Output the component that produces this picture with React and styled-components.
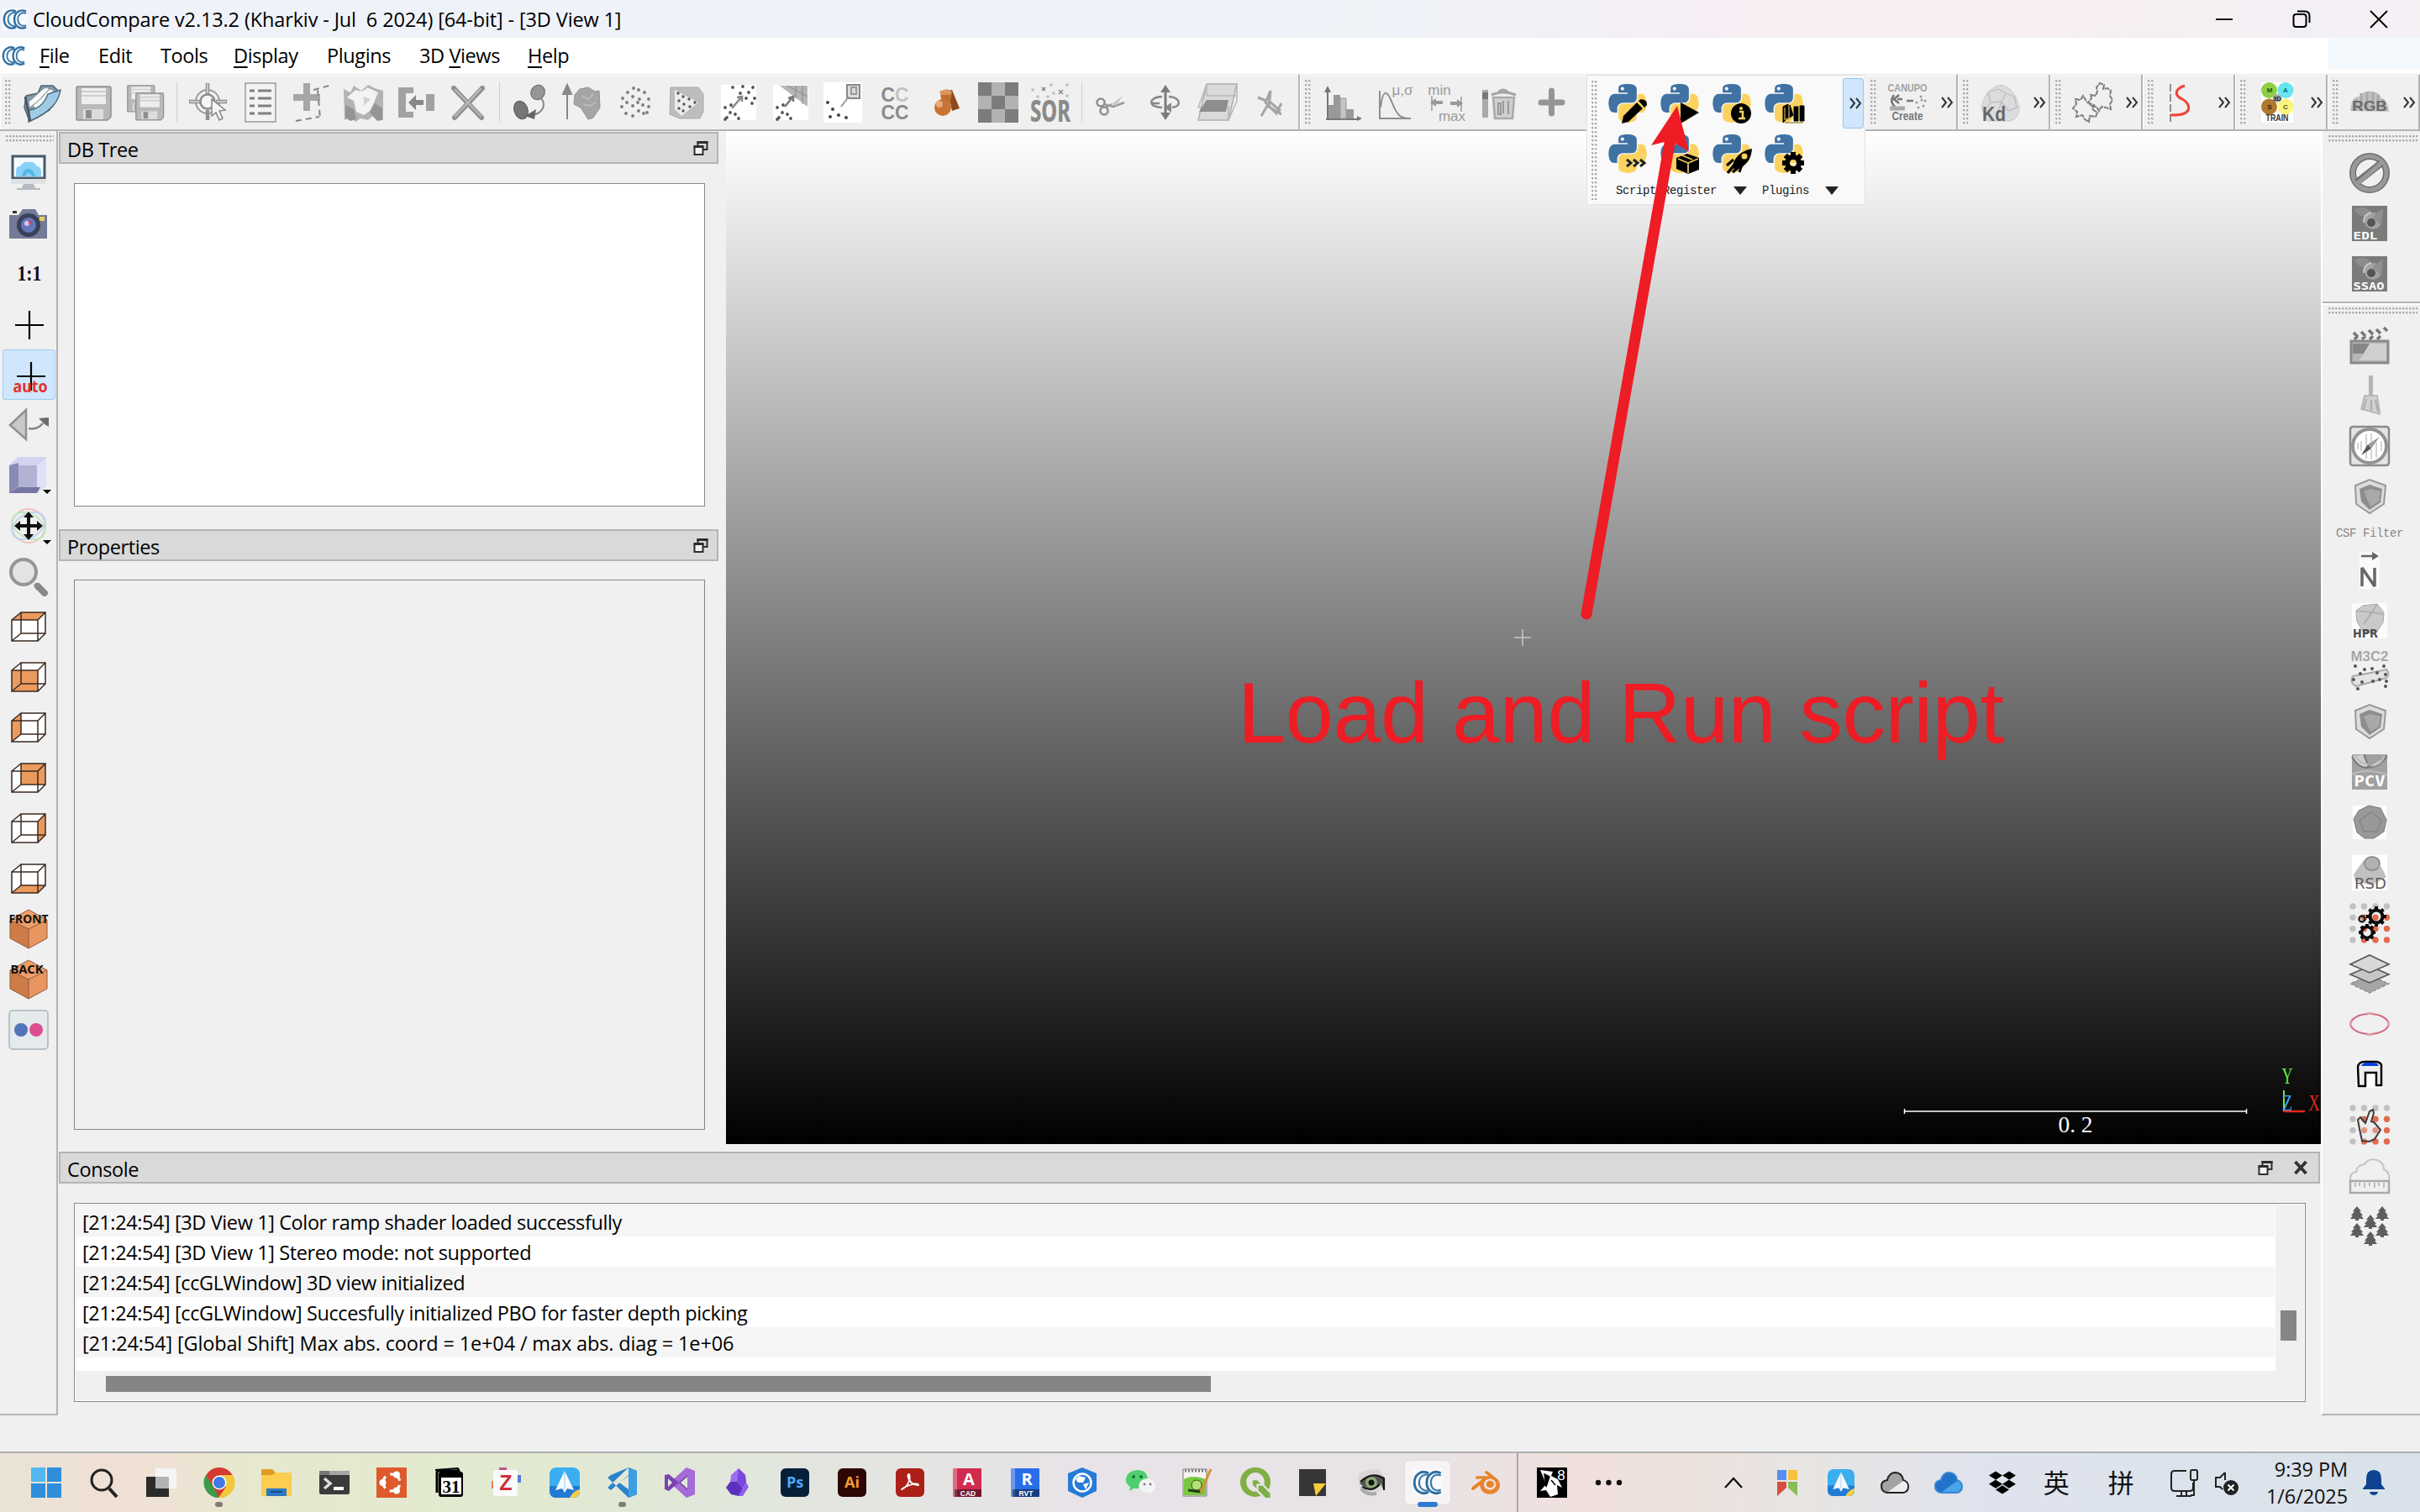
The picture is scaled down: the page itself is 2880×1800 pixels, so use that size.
import React from "react";
import styled, { createGlobalStyle } from "styled-components";
import { FaDropbox, FaUbuntu } from "react-icons/fa";
import { SiBlender, SiQgis } from "react-icons/si";

const Global = createGlobalStyle`
  *{box-sizing:border-box}
  body{margin:0;background:#f0f0f0;overflow:hidden}
`;
const ui = `"Open Sans","Noto Sans","Noto Sans CJK SC",sans-serif`;

const Shell = styled.div`
  width:2880px;height:1800px;display:flex;flex-direction:column;position:relative;
  background:#f0f0f0;color:#000;font:400 23.5px/1 ${ui};letter-spacing:-.4px;white-space:pre;
`;
const TitleBar = styled.header`
  height:45px;flex:none;display:flex;align-items:center;padding-left:3px;gap:6px;
  background:linear-gradient(90deg,#eff3f9 0 50%,#eef3f8 56%,#f2f0f7 64%,#f6eef5 70%,#f7eff0 76%,#f6eff2 90%,#f3f0f5 95%,#f5f0f4);
`;
const TitleText = styled.span`letter-spacing:-.13px;padding-top:3px;`;
const Grow = styled.div`flex:1;`;
const WinButtons = styled.div`display:flex;padding-right:3px;`;
const WinButton = styled.div`width:92px;display:flex;justify-content:center;`;
const MenuBar = styled.nav`
  height:43px;flex:none;display:flex;align-items:center;background:#fff;padding-left:2px;
`;
const MenuItem = styled.span`
  width:${p => p.$w}px;padding-top:1px;
  u{text-decoration-thickness:2px;text-underline-offset:4px;}
`;
const MenuLogo = styled.div`width:45px;display:flex;`;
const MenuCorner = styled.div`width:109px;height:37px;align-self:flex-start;background:#f4f9fd;`;

const ToolRow = styled.div`height:68px;flex:none;display:flex;border-top:1px solid #e9e9e9;position:relative;`;
const Tools = styled.div`
  width:${p => p.$w}px;height:67px;display:flex;align-items:flex-start;padding:6px 0 0 6px;
  border-right:2px solid #b4b4b4;border-bottom:2px solid #b4b4b4;box-shadow:inset 1px 1px 0 #fff;
`;
const Dots = styled.div`
  flex:none;background-image:radial-gradient(circle at 1.3px 1.3px,#a9a9a9 1.1px,transparent 1.4px);background-size:4px 5px;
  ${p => p.$flat ? "height:8px;width:" + p.$w + "px;margin:5px 0 7px 7px;" : "width:7px;height:" + (p.$h || 54) + "px;"}
`;
const Cells = styled.div`display:flex;padding-left:${p => p.$pad}px;`;
const Cell = styled.div`width:${p => p.$w || 61.8}px;height:54px;display:flex;align-items:center;justify-content:center;flex:none;`;
const Sep = styled.div`width:13.5px;height:48px;margin-top:3px;display:flex;justify-content:center;&::after{content:"";width:1px;background:#cfcfcf;}`;
const Chevron = styled.div`
  width:22px;height:54px;display:flex;align-items:center;justify-content:center;
`;
const Popup = styled.div`
  position:absolute;left:1888px;top:0;width:332px;height:155px;background:#f9f9f9;border:1px solid #e3e3e3;
  display:flex;padding:6px 0 0 5px;z-index:2;
`;
const PopBody = styled.div`width:290px;padding-left:5px;`;
const PopGrid = styled.div`display:grid;grid-template-columns:repeat(4,62px);grid-auto-rows:60px;margin-top:-3px;justify-items:center;align-items:center;`;
const PopLabels = styled.div`display:flex;align-items:center;height:28px;padding-left:17px;font:14px/1 "Liberation Mono",monospace;letter-spacing:-.4px;`;
const PopLabel = styled.span`width:${p => p.$w}px;color:#222;`;
const Triangle = styled.i`border:8px solid transparent;border-top:10px solid #222;border-bottom:0;margin-right:${p => p.$gap || 0}px;`;
const PopMore = styled.div`
  position:absolute;right:1px;top:3px;width:25px;height:60px;border:1.5px solid #90c8f6;border-radius:3px;background:#cfe6fc;
  display:flex;align-items:center;justify-content:center;padding-left:4px;
`;

const Body = styled.main`height:1572px;display:flex;align-items:flex-start;`;
const SideBar = styled.aside`
  width:${p => p.$w}px;height:1529px;flex:none;border-bottom:2px solid #b4b4b4;
  ${p => p.$left ? "border-right:2px solid #b4b4b4;" : "border-left:2px solid #fff;"}
`;
const SideGroup = styled.div`${p => p.$line ? "height:200px;padding-bottom:2px;border-bottom:2px solid #b4b4b4;margin-bottom:0;box-shadow:0 2px 0 #fff;" : ""}`;
const SideCell = styled.div`
  height:${p => p.$h || 60}px;display:flex;flex-direction:column;align-items:center;justify-content:${p => p.$h ? "flex-start" : "center"};
  padding-top:${p => p.$h ? 6 : 0}px;gap:13px;position:relative;
  ${p => p.$left ? "width:63px;margin-left:" + (p.$on ? 3 : 2) + "px;" : "width:112px;"}
  ${p => p.$on ? "background:#cfe6fc;border:1px solid #99cdf8;border-radius:3px;" : ""}
`;
const SideLabel = styled.span`font:14px/1 "Liberation Mono",monospace;letter-spacing:-.4px;color:#858585;`;

const Center = styled.div`width:2693px;flex:none;height:1572px;display:flex;flex-direction:column;`;
const Upper = styled.div`display:flex;height:1206px;`;
const Docks = styled.div`width:795px;padding:1px 0 0 1px;display:flex;flex-direction:column;`;
const DockTitle = styled.div`
  width:${p => p.$w}px;height:38px;border:2px solid #b4b4b4;background:#d9d9d9;display:flex;align-items:center;
  padding:5px ${p => p.$pr || 10}px 0 8px;flex:none;
  svg{margin-top:-5px;}
`;
const Box = styled.div`
  width:751px;height:${p => p.$h}px;margin:${p => p.$m};border:1px solid #828790;background:${p => p.$bg};flex:none;
`;
const Viewport = styled.div`flex:1;position:relative;background:linear-gradient(#fff,#000);`;
const Overlay = styled.svg`position:absolute;left:0;top:0;`;
const Caption = styled.div`
  position:absolute;left:609px;top:634px;font:102.5px/1.15 "Liberation Sans",Arial,sans-serif;color:#ee1c24;letter-spacing:-.3px;
`;
const ConsoleWrap = styled.section`padding:9px 0 0 1px;`;
const ConsoleBox = styled.div`
  width:2656px;height:237px;margin:23px 0 0 18px;border:1px solid #828790;background:#f0f0f0;box-shadow:inset 0 0 0 1px #fff;
  display:grid;grid-template-columns:2617px 1fr;grid-template-rows:196px 1fr;padding:3px 2px;
`;
const Log = styled.div`height:196px;overflow:hidden;background:#fff;border-right:1px solid #fff;`;
const Line = styled.div`
  height:36px;padding:3px 0 0 7px;display:flex;align-items:center;background:${p => p.$odd ? "#fff" : "#f5f5f5"};
  letter-spacing:${p => p.$track || -0.4}px;
`;
const VThumb = styled.div`width:19px;height:36px;background:#858585;margin:124px 0 0 6px;`;
const HThumb = styled.div`width:1315px;height:19px;background:#858585;margin:6px 0 0 35px;`;

const TaskBar = styled.footer`
  height:72px;border-top:2px solid #adafae;display:flex;align-items:center;
  background:linear-gradient(90deg,#e9e3d5,#efe0d6 4%,#f0e1d5 6.5%,#e7e8cf 10%,#e2ead0 18%,#e1e9d6 26%,#e3e5e0 35%,#e8e3e8 45%,#e8e3e5 58%,#f0e0dd 66%,#ece2de 70%,#e7e5e3 75%,#dfe3ed 82%,#d9e2ea);
`;
const Task = styled.div`
  width:${p => p.$w || 68.5}px;height:68px;display:flex;align-items:center;justify-content:center;flex:none;position:relative;
  font-size:31px;color:#111;margin-left:${p => p.$ml || 0}px;
`;
const RunDot = styled.i`position:absolute;bottom:5px;width:${p => p.$wide ? 24 : 9}px;height:6px;border-radius:3px;background:${p => p.$wide ? "#2f7ad0" : "#7d7d78"};`;
const ActiveTile = styled.div`width:56px;height:54px;background:#f6f4f5;border:1px solid #e0dcdd;border-radius:7px;display:flex;align-items:center;justify-content:center;`;
const TaskSep = styled.div`width:1.5px;height:70px;background:#aaa6a6;margin:0 6px 0 3px;`;
const Clock = styled.div`width:121px;text-align:right;font-size:23.5px;line-height:32px;color:#111;letter-spacing:-.1px;`;

const Svg = styled.svg`overflow:visible;flex:none;display:block;`;
const I = ({ s = 48, w, h, vb = "0 0 48 48", children }) => (
  <Svg width={w || s} height={h || s} viewBox={vb} fill="none">{children}</Svg>
);
const T = ({ x = 24, y, z = 14, c = "#555", f = "Liberation Sans", b = 700, len, children }) => (
  <text x={x} y={y} fontSize={z} fill={c} fontWeight={b} fontFamily={`${f}, sans-serif`} textAnchor="middle" letterSpacing="0"
    textLength={len} lengthAdjust="spacingAndGlyphs">{children}</text>
);
const dots = (list, r, c) => list.map(([x, y], i) => <circle key={i} cx={x} cy={y} r={r} fill={c} />);

const CC = ({ s = 32 }) => (
  <I s={s} vb="0 0 32 32">
    <path d="M0 2h32v28H0z" fill="#ffffff" fillOpacity=".5" />
    <path d="M17 6C9 2 2 8 2 16s7 14 15 10M30 6C22 2 15 8 15 16s7 14 15 10" stroke="#2f6ea0" strokeWidth="2.600" />
    <path d="M18 8C12 6 7 10 7 16s5 10 11 8M30 8.500c-6-2.500-10.500 1.500-10.500 7.500s4.500 10 10.500 7.500" stroke="#3d7cac" strokeWidth="2" />
  </I>
);
const More = () => <I w={16} h={14} vb="0 0 16 14"><path d="M2 1l5 6-5 6M9 1l5 6-5 6" stroke="#333" strokeWidth="2" /></I>;
const FloatIcon = () => (
  <I w={18} h={18} vb="0 0 18 18"><path d="M5.500 6V2h11v9H12" stroke="#2d2d2d" strokeWidth="2" /><path d="M4.500 1h13v3h-13zM.5 6h12v3.500H.5z" fill="#2d2d2d" /><path d="M1.500 8h10v9h-10z" stroke="#2d2d2d" strokeWidth="2" fill="#f3f3f3" /></I>
);
const CloseIcon = () => <I w={18} h={18} vb="0 0 18 18"><path d="M2.500 2l13 14M15.500 2l-13 14" stroke="#333" strokeWidth="3.800" /></I>;

const Floppy = ({ x = 3, y = 4, k = 1 }) => (
  <g transform={`translate(${x} ${y}) scale(${k})`}>
    <path d="M2 1h38q2 0 2 2v34l-4 4H2q-1 0-1-1V2z" fill="#b9b9b9" stroke="#8f8f8f" strokeWidth="1.500" />
    <path d="M7 3h29v19H7z" fill="#eee" /><path d="M7 7h29M7 12h29" stroke="#cfcfcf" strokeWidth="2" />
    <path d="M9 28h24v12H9z" fill="#dcdcdc" /><path d="M12 29h7v10h-7z" fill="#8e8e8e" />
  </g>
);
const scatter = [[8, 30], [14, 36], [10, 42], [20, 38], [24, 43], [15, 27], [8, 44]];
const toolIcons = [
  <I><path d="M6 16l14-3 4-9h14l5 5-9 24L10 46 4 30z" fill="#7f9aab" stroke="#56636c" strokeWidth="1.500" /><path d="M9 23C18 17 24 8 30 6l4 2C28 12 24 22 10 30zM14 27C24 22 30 10 35 8l4 2C34 16 32 24 17 32z" fill="#f7f8fa" stroke="#8e979d" /><path d="M10 33c14-2 19-11 22-19l15-5c-2 13-10 26-38 38z" fill="#9fcbe6" stroke="#4f6877" strokeWidth="1.500" /><path d="M5 17l6 29" stroke="#3e5563" strokeWidth="2.500" /></I>,
  <I><Floppy /></I>,
  <I><Floppy x={3} y={3} k={0.78} /><Floppy x={13} y={12} k={0.8} /></I>,
  null,
  <I><circle cx="23" cy="23" r="14" stroke="#999" strokeWidth="2" /><circle cx="23" cy="23" r="8.500" stroke="#8d8d8d" strokeWidth="2.500" fill="#f6f6f6" /><path d="M23 1v13M23 33v12M1 23h13M33 23h13" stroke="#909090" strokeWidth="4.500" /><path d="M23 2v11M2 23h11M34 23h11" stroke="#e0e0e0" strokeWidth="1.500" /><path d="M28 20l0 20 5-4 4 9 4-2-4-9 7-1z" fill="#f4f4f4" stroke="#858585" strokeWidth="1.500" /></I>,
  <I><path d="M6 1h36v46H6z" fill="#f3f3f3" stroke="#9b9b9b" strokeWidth="1.500" />{[10, 19, 28, 37].map(y => <path key={y} d={`M11 ${y}h6M21 ${y}h16`} stroke="#808080" strokeWidth="3" />)}</I>,
  <I><path d="M2 18h32M18 1v33" stroke="#a6a6a6" strokeWidth="8" /><path d="M26 9l22-6M31 9l3 34M5 46l28-5" stroke="#858585" strokeWidth="2" strokeDasharray="7 5" /></I>,
  <I><path d="M0 8l8 4 4-8 9 6 8-7 8 4 10 3v34l-8 1-4-5-6 5-9-2-6 4-6-6-7 4z" fill="#b3b3b3" /><path d="M14 9q9 4 14-3l13 6-5 12-5 10-7 5-9-4-3-13-8-4z" fill="#f3f3f3" /><path d="M2 27l10 5 3 12-7 2-6-4zM31 36l6-11 9 6v14l-6 1z" fill="#949494" /><path d="M24 17l8 3-8 8z" fill="#d2d2d2" /></I>,
  <I><path d="M3 6h18v7h-9v22h9v7H3zM36 14h10v20H36z" fill="#a2a2a2" /><path d="M15 24l9-9v6h9v6h-9v6z" fill="#888" /></I>,
  <I><path d="M7 7l33 35M41 7L8 42" stroke="#8f8f8f" strokeWidth="6" strokeLinecap="round" /><path d="M9 9l30 31M39 8L9 40" stroke="#b7b7b7" strokeWidth="2.500" strokeLinecap="round" /></I>,
  null,
  <I><ellipse cx="32" cy="12" rx="8" ry="9" transform="rotate(35 32 12)" fill="#959595" stroke="#666" /><ellipse cx="12" cy="33" rx="8" ry="11" transform="rotate(-20 12 33)" fill="#777" stroke="#555" /><path d="M36 19c6 7 3 17-10 20" stroke="#888" strokeWidth="2" /><path d="M17 40l13-8-2 12z" fill="#666" /></I>,
  <I><path d="M5 44V10M5 3L0 14h10z" stroke="#888" strokeWidth="2" fill="#888" /><path d="M14 15l6-7 10-2 8 5 5-1 1 20-8 12-6 2-9-14-8-4z" fill="#a5a5a5" stroke="#8f8f8f" /><path d="M22 16l8 4 6-6M24 26l8 2 7-4" stroke="#bbb" strokeWidth="2" /></I>,
  <I>{dots([[22, 7], [28, 9], [35, 12], [15, 12], [40, 20], [29, 20], [21, 17], [9, 19], [14, 24], [8, 29], [21, 28], [33, 27], [40, 29], [28, 34], [13, 37], [34, 37], [21, 40], [27, 24], [38, 36]], 1.9, "#7b7b7b")}</I>,
  <I><path d="M5 6h33l6 8v21l-4 8H16L4 38z" fill="#bdbdbd" stroke="#a8a8a8" /><path d="M10 9l28 15-20 16-8-8z" fill="#ededed" />{dots([[14, 13], [20, 17], [27, 20], [34, 24], [15, 22], [21, 26], [28, 29], [15, 31], [20, 34]], 1.7, "#555")}</I>,
  <I><path d="M3 3h42v42H3z" fill="#fff" />{dots([...scatter, [17, 6], [29, 5], [41, 6], [26, 13], [36, 12], [43, 19], [33, 19], [40, 25]], 1.9, "#555")}<path d="M16 31l11-13M22 18l6-1v6" stroke="#888" strokeWidth="2.500" /></I>,
  <I><path d="M3 3h42v42H3z" fill="#fff" /><path d="M11 4h33v25z" fill="#b5b5b5" /><path d="M20 4l24 13M30 4v15M38 4v22" stroke="#888" />{dots(scatter, 1.9, "#555")}<path d="M17 29l9-11M21 19l6-2v6" stroke="#777" strokeWidth="2.500" /></I>,
  <I><path d="M1 0h46v48H1z" fill="#fff" /><path d="M29 3h15v16H29z" stroke="#888" strokeWidth="2" fill="#ddd" /><path d="M34 6h6v8h-6zM31 17L22 29" stroke="#999" strokeWidth="2" />{dots([[6, 24], [12, 32], [9, 41], [19, 39], [28, 42]], 2, "#444")}</I>,
  <I><T x={24} y={23} z={23} c="#8a8a8a" len={33}>C<tspan fill="#c4c4c4">C</tspan></T><T x={24} y={44} z={23} c="#8a8a8a" len={33}>CC</T></I>,
  <I><path d="M26 10l5-1 9 22-9 3z" fill="#8d4b1f" /><path d="M17 12q8-7 14 0l-2 13-10 3z" fill="#c26d31" /><circle cx="20" cy="30" r="10" fill="#c97435" /><circle cx="16" cy="26" r="4" fill="#eea878" /><path d="M16 11q8-5 15 0l-2 4H18z" fill="#dc9560" /></I>,
  <I>{[0, 1, 2].map(r => [0, 1, 2].map(c => <rect key={r + "" + c} x={c * 16} y={r * 16} width="16" height="16" fill={(r + c) % 2 ? "#b2b2b2" : "#7c7c7c"} />))}</I>,
  <I>{dots([[3, 9], [16, 8], [25, 3], [44, 3], [9, 17], [21, 17], [44, 16], [28, 13]], 1.8, "#bbb")}<path d="M14 6l4 4m0-4l-4 4M34 9l5 5m0-5l-5 5" stroke="#888" strokeWidth="1.500" /><T y={47} z={35} c="#8a8a8a" f="Noto Sans" b={800} len={48}>SOR</T></I>,
  null,
  <I><circle cx="9" cy="24" r="4.500" stroke="#8b8b8b" strokeWidth="2.500" /><circle cx="13" cy="34" r="4.500" stroke="#8b8b8b" strokeWidth="2.500" /><path d="M12 26l12 3 13-5M15 30l7-4" stroke="#999" strokeWidth="2.500" /><path d="M22 26l13-10-8 12z" fill="#c7c7c7" /></I>,
  <I><path d="M24 8v32" stroke="#7b7b7b" strokeWidth="3" /><path d="M24 3l-6 9h12zM24 45l-6-9h12z" fill="#7b7b7b" /><path d="M20 17C2 18 4 30 20 30M28 17c14 1 16 12 4 13M8 25h9" stroke="#888" strokeWidth="2.500" /><path d="M31 24v12l-8-6z" fill="#888" /></I>,
  <I><path d="M11 2h36L37 45H1z" fill="#dadada" stroke="#aeaeae" strokeWidth="1.500" /><path d="M11 2v14M47 2v20L37 45M11 16h36M1 30h36v15M1 30L11 2" stroke="#b8b8b8" strokeWidth="1.500" /><path d="M11 21h26l-3 14H2z" fill="#8d8d8d" /></I>,
  <I><path d="M10 18l10 4 5-12-2 19 15 9M18 23l14 14 6-12M14 40l10-17 13 11" stroke="#a4a4a4" strokeWidth="3" /></I>,
];
const scalarIcons = [
  <I><path d="M5 44V8M3 44h40" stroke="#777" strokeWidth="2" /><path d="M1 12L5 4l4 8zM40 40l6 3-6 3z" fill="#777" /><path d="M6 27h6v16H6zM12 15h8v28h-8zM27 32h9v11h-9z" fill="#999" /><path d="M20 19h7v24h-7z" fill="#c4c4c4" stroke="#999" /></I>,
  <I><path d="M5 10v33h37M6 30C9 6 14 10 20 25s10 17 18 18" stroke="#8d8d8d" strokeWidth="2" /><T x={32} y={15} z={17} c="#9b9b9b" b={400}>μ,σ</T></I>,
  <I><T x={14} y={15} z={17} c="#9b9b9b" b={400}>min</T><T x={29} y={46} z={17} c="#9b9b9b" b={400}>max</T><path d="M5 16v18M40 17v18" stroke="#999" strokeWidth="1.500" /><path d="M3 24l7-5v3h8v4h-8v3zM42 25l-7-5v3h-8v4h8v3z" fill="#999" /></I>,
  <I><path d="M3 9h7v33H3z" fill="#aaa" /><path d="M3 12h7v8H3z" fill="#777" /><path d="M16 18h25l-2 25H18z" fill="#cfcfcf" stroke="#aaa" strokeWidth="2.500" /><path d="M14 15q14-6 29 0M22 12q6-6 12 0" stroke="#a5a5a5" strokeWidth="3" /><path d="M22 25h3v13h-3zM28 22v15M34 22v16" stroke="#999" strokeWidth="2" /></I>,
  <I><path d="M11 24h25M23.500 10v27" stroke="#959595" strokeWidth="7" strokeLinecap="round" /></I>,
];
const Py = ({ children }) => (
  <I><g transform="scale(.375)"><path fill="#4072a4" fillRule="evenodd" d="M49.330 62h29.159C86.606 62 93 55.132 93 46.981V19.183c0-7.912-6.632-13.856-14.555-15.176-5.014-.835-10.195-1.215-15.187-1.191-4.990.023-9.612.448-13.805 1.191C37.098 6.188 35 10.758 35 19.183V30h29v4H23.776c-8.484 0-15.914 5.108-18.237 14.811-2.681 11.120-2.800 17.919 0 29.530C7.614 86.983 12.569 93 21.054 93H31V79.952C31 70.315 39.428 62 49.330 62zm-1.838-39.110c-3.026 0-5.478-2.479-5.478-5.545 0-3.079 2.451-5.581 5.478-5.581 3.015 0 5.479 2.502 5.479 5.581-.001 3.066-2.465 5.545-5.479 5.545z" /><path fill="#fbd25f" d="M122.281 48.811C120.183 40.363 116.178 34 107.682 34H97v12.981C97 57.031 88.206 65 78.489 65H49.330C41.342 65 35 72.326 35 80.326v27.800c0 7.910 6.745 12.564 14.462 14.834 9.242 2.717 17.994 3.208 29.051 0C85.862 120.831 93 116.549 93 108.126V97H64v-4h43.682c8.484 0 11.647-5.776 14.599-14.660 3.047-9.145 2.916-17.799 0-29.529z" /></g>{children}</I>
);
const teeth = (cx, cy, r, w, c, n = 8) => Array.from({ length: n }, (_, i) => (
  <rect key={i} x={cx - w / 2} y={cy - r} width={w} height={r * 0.5} fill={c} transform={`rotate(${i * 360 / n} ${cx} ${cy})`} />
));
const pyIcons = [
  <Py><path d="M17 48l2-9 16-16 7 7-17 16zM37 21l3-2q8 1 7 7l-3 3z" fill="#000" /></Py>,
  <Py><path d="M25 23l22 12-22 13z" fill="#000" /></Py>,
  <Py><circle cx="35" cy="36" r="12" fill="#000" /><path d="M33 34h4v8M32 42h8" stroke="#fbd25f" strokeWidth="2.500" /><circle cx="35" cy="30" r="2" fill="#fbd25f" /></Py>,
  <Py><path d="M23 28l6-3v16l-6 6zM31 26l4 12-4 3zM36 28h5v17h-5zM43 27h5v18h-5z" fill="#000" stroke="#000" /><path d="M25 29v14l6-1M42 28v17M25 47h22" stroke="#a98f45" strokeWidth="1.500" /></Py>,
  <Py><path d="M23 31l5 4-5 4M31 31l5 4-5 4M39 31l5 4-5 4" stroke="#222" strokeWidth="3" /></Py>,
  <Py><path d="M20 29l13-5 14 5v14l-13 5-14-6z" fill="#000" /><path d="M22 30l12 5 12-5M34 35v12M27 26l12 5" stroke="#e8c35b" strokeWidth="1.800" /></Py>,
  <Py><path d="M24 41q4-19 24-23-1 18-18 25z" fill="#000" /><circle cx="39" cy="27" r="3.500" fill="#fbd25f" /><path d="M19 47l9-11M25 46l6-5" stroke="#000" strokeWidth="3.500" /><path d="M26 31l-8 7M36 37l-3 9" stroke="#000" strokeWidth="3" /></Py>,
  <Py>{teeth(35, 35, 13, 6, "#000")}<circle cx="35" cy="35" r="7" stroke="#000" strokeWidth="6" /></Py>,
];
const pluginIcons = [
  <I><T y={11} z={12} c="#a2a2a2" len={47}>CANUPO</T><path d="M8 15q-6 8 1 14M14 15l-6 5 6 5M12 20h6M23 22h8" stroke="#777" strokeWidth="2.500" />{dots([[35, 24], [40, 17], [45, 22], [37, 30], [43, 28], [41, 21]], 1.500, "#999")}<path d="M3 31h18" stroke="#aaa" strokeWidth="5" /><T y={45} z={14} c="#777" len={37}>Create</T></I>,
  <I><path d="M2 32Q6 6 26 3q16 4 21 27 0 12-10 16H10z" fill="#dcdcdc" stroke="#c8c8c8" /><path d="M10 12l12-4 9 5-5 10-13 1zM31 13l10 4 3 13-10 4-8-11M13 24L6 34M26 23l-4 12" stroke="#bdbdbd" strokeWidth="1.300" /><T x={17} y={46} z={23} c="#666" len={28}>Kd</T></I>,
  <I><path d="M22 15l6 1 2-5-1-5 4-5 5 2-1 5 5-1 4 3-1 6 3 5-3 5 1 6-6-2-5-1-3 5-3-5-7-1-2-5 3-4zM18 24l8 3-2 5 6 4-2 5-7-1-1 7-5-3-3-5-7 2 1-6-5-4 4-5-1-6 6 1 3-5 3 5z" stroke="#7d7d7d" strokeWidth="2" strokeDasharray="6 1" /></I>,
  <I><path d="M7 2v46" stroke="#777" strokeWidth="1.600" strokeDasharray="9 3" /><path d="M24 4C11 8 12 16 21 20s16 20-14 19" stroke="#ef4438" strokeWidth="3" /></I>,
  <I><path d="M5 0h38v48H5z" fill="#fff" /><circle cx="14.500" cy="9.500" r="9.500" fill="#8fce45" /><circle cx="34" cy="9.500" r="9.500" fill="#67e4ee" /><circle cx="14.500" cy="29" r="9.500" fill="#b0782c" /><circle cx="34" cy="29" r="9.500" fill="#fbf580" /><circle cx="24" cy="19" r="5" fill="#aaa" /><T x={15} y={12} z={8} c="#264d18">M</T><T x={34} y={12} z={8} c="#146b73">A</T><T x={15} y={32} z={8} c="#33200a">S</T><T x={34} y={32} z={8} c="#4d4a15">C</T><T x={24} y={22} z={8} c="#222">3D</T><T y={46} z={10} c="#333" len={27}>TRAIN</T></I>,
  <I><path d="M1 34Q2 16 12 17q5-8 16-6 8 1 10 8 8 2 9 16z" fill="#c2c2c2" /><path d="M8 34V20m6 14V13m7 20V11m7 23V12m6 22V15m6 19V20" stroke="#aaa" strokeWidth="3" /><T y={34} z={17} c="#6c6c6c" len={42}>RGB</T></I>,
];

const faces = {
  top: "M7 15L18 6h29L38 15z", front: "M7 15h31v25H7z", left: "M7 15l11-9v25L7 40z",
  back: "M18 6h29v25H18z", right: "M38 15l9-9v25l-9 9z", bottom: "M7 40l11-9h29l-9 9z",
};
const Wire = ({ f }) => (
  <I><g transform="translate(-3 1)"><path d="M18 6h29v25l-9 9H7V15z" fill="#fff" /><path d={faces[f]} fill="#eb9a5e" /><path d="M7 15h31v25H7zM18 6h29v25H18zM7 15L18 6M38 15l9-9M38 40l9-9M7 40l11-9" stroke="#3a2a20" strokeWidth="1.500" /></g></I>
);
const SolidCube = ({ t }) => (
  <I><path d="M2 13L24 1l22 12v22L24 47 2 35z" fill="#ee9f68" /><path d="M2 13l22 11v23L2 35z" fill="#ce7c47" /><path d="M24 24l22-11v22L24 47z" fill="#e99560" /><path d="M2 13l22 11 22-11M24 24v23M2 13L24 1l22 12v22L24 47 2 35z" stroke="#8d5d40" strokeWidth="1" /><T y={17} z={14} x={t === "FRONT" ? 24 : 22} c="#111" f="Noto Sans" len={t === "FRONT" ? 47 : 39}>{t}</T></I>
);
const CrossLines = ({ y = 24, x = 24 }) => <path d={`M${x - 17} ${y}h34M${x} ${y - 17}v34`} stroke="#000" strokeWidth="2.200" />;
const Caret = styled.i`position:absolute;right:4px;bottom:8px;border:5px solid transparent;border-top:5px solid #000;border-bottom:0;`;
const leftIcons = [
  <I><path d="M5 4h38v26H5z" fill="#f4fbff" stroke="#475a6b" strokeWidth="3" /><path d="M9 28q-1-14 5-12 4-6 10-5 7-1 10 5 6-1 5 12z" fill="#8ad2f5" /><path d="M16 28q2-9 8-9t8 9h-4q-1-4-4-4t-4 4z" fill="#56b7e8" /><path d="M3 31h42v6H3z" fill="#dfe1e4" /><path d="M18 37h12l2 5h6v2H10v-2h6z" fill="#b4bac2" /></I>,
  <I><path d="M1 14h11l5-7h15l4 7h10v28H1z" fill="#737b98" /><circle cx="24" cy="26" r="14" fill="#394058" /><circle cx="24" cy="26" r="9" fill="#6678bb" /><circle cx="22" cy="24" r="3" fill="#d5c6ee" /><circle cx="26" cy="23" r="2" fill="#c44a5b" /><rect x="37" y="16" width="6" height="5" fill="#e6cf62" /><rect x="5" y="9" width="5" height="3" fill="#333" /></I>,
  <I><T y={32} x={25} z={26} c="#1a0a16" f="Liberation Serif" len={29}>1:1</T></I>,
  <I><CrossLines x={25} y={25} /></I>,
  <I><CrossLines y={26} x={26} /><T x={25} y={45} z={20} c="#e3322b" f="Noto Sans" len={41}>auto</T></I>,
  <I><path d="M2 24L21 6v35z" fill="#c8c8c8" stroke="#909090" strokeWidth="2.500" /><path d="M24 28q10 2 17-6" stroke="#858585" strokeWidth="2.500" /><path d="M36 16l12-1v11l-5-3z" fill="#6b6b6b" /></I>,
  <I><path d="M1 12L12 2h33v34L34 45H1z" fill="#b2b3d3" /><path d="M12 2h33L34 12H1z" fill="#d3d3f0" /><path d="M34 12L45 2v34l-11 9z" fill="#e0e0f8" /><path d="M1 12l11-3v28L1 45z" fill="#8a8bb4" /><path d="M1 45l11-7h26l-4 7z" fill="#7576a3" /></I>,
  <I><circle cx="24" cy="24" r="20" stroke="#eec0c0" strokeWidth="2" /><ellipse cx="24" cy="24" rx="21" ry="14" transform="rotate(30 24 24)" stroke="#bfe8bf" strokeWidth="2" /><ellipse cx="24" cy="24" rx="21" ry="14" transform="rotate(-30 24 24)" stroke="#bfd4ef" strokeWidth="2" /><path d="M11 24h26M24 11v26" stroke="#111" strokeWidth="4" /><path d="M7 24l7-6v12zM41 24l-7-6v12zM24 7l-6 7h12zM24 41l-6-7h12z" fill="#111" /></I>,
  <I><circle cx="18" cy="19" r="15" fill="#e3e3e3" stroke="#959595" strokeWidth="4" /><path d="M31 33l4 4" stroke="#aaa" strokeWidth="4" /><path d="M35 36l8 8" stroke="#888" strokeWidth="8" strokeLinecap="round" /></I>,
  ...["top", "front", "left", "back", "right", "bottom"].map(f => <Wire f={f} />),
  <SolidCube t="FRONT" />, <SolidCube t="BACK" />,
  <I><rect x="1" y="1" width="46" height="46" rx="4" fill="#e5eaed" stroke="#a9b4ba" strokeWidth="1.500" /><circle cx="15" cy="24" r="8" fill="#5274b8" /><circle cx="33" cy="24" r="8" fill="#dc4d92" /></I>,
];

const Stone = ({ t }) => (
  <I s={42} vb="0 0 42 42"><path d="M0 0h42v42H0z" fill="#7b7b7b" /><path d="M3 5q10-8 20 2l-4 5q-10 3-16-7z" fill="#8c8c8c" /><circle cx="25" cy="18" r="10" fill="#a3a3a3" /><path d="M24 13L37 3l-2 20z" fill="#909090" /><circle cx="23" cy="20" r="5" fill="#555" /><path d="M14 20q0-10 9-12" stroke="#ccc" strokeWidth="2" /><T x={t.length > 3 ? 20 : 16} y={40} z={13} c="#fff" f="DejaVu Sans Mono" len={t.length > 3 ? 37 : 29}>{t}</T></I>
);
const Shield = () => <I><path d="M7 11L24 4l19 7-2 22-17 11L8 33z" fill="#dcdcdc" stroke="#999" strokeWidth="2" /><path d="M12 15l12-5 15 5-2 16-13 9-10-10z" fill="#8d8d8d" /><path d="M17 18l8-3 12 3-2 12-10 6z" fill="#a9a9a9" /></I>;
const DotGrid = () => <>{[0, 1, 2, 3].map(r => [0, 1, 2, 3].map(c => <circle key={r + "" + c} cx={4 + c * 13.500} cy={4 + r * 13.300} r="3.700" fill={r && c ? "#e36a4a" : "#c1c1c1"} />))}</>;
const tree = (x, y) => <path key={x + "-" + y} d={`M${x} ${y}l5 6h-2l4 5h-2l3 4h-6v2h-4v-2h-6l3-4h-2l4-5h-2z`} fill="#5e5e5e" />;
const rightTop = [
  <I><circle cx="24" cy="24" r="20" stroke="#707070" strokeWidth="8" /><circle cx="24" cy="24" r="20" stroke="#999" strokeWidth="5" /><path d="M9 35L38 12" stroke="#707070" strokeWidth="8.500" /><path d="M10 36L39 11" stroke="#999" strokeWidth="5" /></I>,
  <Stone t="EDL" />, <Stone t="SSAO" />,
];
const rightIcons = [
  <I><path d="M2 19h44v26H2z" fill="#b7b7b7" stroke="#8a8a8a" strokeWidth="3" /><path d="M4 22h20l-4 12H4z" fill="#868686" /><path d="M24 22h20v20H12z" fill="#d0d0d0" /><path d="M2 8l42-6 2 5-42 8zM3 12h42v5H3z" fill="#eee" /><path d="M5 9l5 5M14 8l5 5M23 6l5 5M32 5l5 5M41 3l4 4M10 13l-4 4M19 13l-4 4M28 13l-4 4M37 13l-4 4" stroke="#777" strokeWidth="3.500" /></I>,
  <I><path d="M23 0h5v24h-5z" fill="#b5b5b5" /><path d="M18 24h15l3 18 0 4-22-6z" fill="#d0d0d0" stroke="#b0b0b0" strokeWidth="1.500" /><path d="M20 28l-3 12M26 29v13M31 29l3 14" stroke="#aaa" strokeWidth="2" /></I>,
  <I><rect x="1" y="1" width="46" height="46" rx="3" fill="#e4e4e4" stroke="#8b8b8b" strokeWidth="2.500" /><circle cx="24" cy="24" r="20" fill="#fff" stroke="#929292" strokeWidth="4" /><path d="M14 18v12M20 10v29M26 9v10M26 28v12M32 20v18M38 18v12M10 20v8" stroke="#c5c5c5" strokeWidth="1.500" /><path d="M14 35l8-13 4 5z" fill="#555" /><path d="M36 13L22 22l4 5z" fill="#9c9c9c" /></I>,
  <Shield />,
  <I><path d="M12 2h24v44H12z" fill="#fafafa" /><path d="M14 7h16" stroke="#666" strokeWidth="2.500" /><path d="M27 2l8 5-8 5z" fill="#666" /><path d="M15 43V21l15 22V21" stroke="#666" strokeWidth="3.500" strokeLinejoin="bevel" /></I>,
  <I><path d="M3 3h42v42H3z" fill="#fcfcfc" /><path d="M8 12l8-6 17-2 8 10-1 12-8 12H17L9 25z" fill="#c9c9c9" stroke="#a5a5a5" /><path d="M8 12l19 2 6-10M27 14L17 28M27 14l14 2" stroke="#aaa" strokeWidth="1.500" /><T x={19} y={44} z={14} c="#4d4d4d" f="DejaVu Sans" len={30}>HPR</T></I>,
  <I><T y={12} z={16} c="#a8a8a8" len={45}>M3C2</T><path d="M4 30q-4 8 4 12l36-10q5-4 0-10L20 27z" stroke="#aaa" strokeWidth="2" fill="#e4e4e4" />{dots([[7, 18], [18, 22], [13, 27], [27, 21], [33, 26], [41, 18], [43, 28], [5, 34], [15, 37], [10, 45], [28, 36], [36, 34], [43, 42], [44, 36]], 2, "#555")}</I>,
  <Shield />,
  <I s={42} vb="0 0 42 42"><path d="M0 0h42v42H0z" fill="#a1a1a1" /><path d="M0 3q10 16 20 12L14 0M20 15q12 2 22-13" fill="#d0d0d0" stroke="#777" strokeWidth="2" /><path d="M3 0q6 12 17 12M24 14Q36 12 38 2M0 24q15-8 42 0" stroke="#bbb" strokeWidth="2" /><T x={21} y={38} z={17} c="#fff" f="DejaVu Sans Mono" len={37}>PCV</T></I>,
  <I><path d="M4 4h40v40H4z" fill="#fff" /><path d="M5 20l6-10 12-6 14 3 7 14-3 14-12 8H18L9 36z" fill="#999" stroke="#777" /><path d="M12 22l14-10 12 9-5 14H17z" stroke="#858585" strokeWidth="1.500" /></I>,
  <I><path d="M3 3h42v42H3z" fill="#fff" /><path d="M5 26L17 9 38 17l6 12-18 10L7 34z" fill="#c0c0c0" /><ellipse cx="27" cy="13" rx="9" ry="8" fill="#b2b2b2" stroke="#8f8f8f" strokeWidth="2" /><T x={25} y={43} z={17} c="#5c5c5c" f="DejaVu Sans" b={400} len={38}>RSD</T></I>,
  <I><DotGrid /><circle cx="32" cy="16" r="7.500" stroke="#0b0b0b" strokeWidth="4" />{teeth(32, 16, 12, 4, "#0b0b0b")}<circle cx="21" cy="35" r="6.500" stroke="#0b0b0b" strokeWidth="3.500" />{teeth(21, 35, 10, 4, "#0b0b0b")}<circle cx="15" cy="19" r="3.500" stroke="#222" strokeWidth="2.500" /></I>,
  <I><path d="M24 26l23 10-23 11L1 36z" fill="#a5a5a5" stroke="#888" strokeWidth="1.200" strokeDasharray="4 2" /><path d="M24 15l23 10-23 10L1 25z" fill="#c7c7c7" stroke="#555" strokeWidth="1.600" /><path d="M24 2l23 11-23 10L1 13z" fill="#d8d8d8" stroke="#555" strokeWidth="1.600" /></I>,
  <I><ellipse cx="24" cy="24" rx="22.500" ry="12" stroke="#d4667d" strokeWidth="2" /><path d="M0 21h3v6H0zM45 21h3v6h-3zM21 10h6v3h-6zM21 35h6v3h-6z" fill="#e6a0ad" /></I>,
  <I><path d="M8 8h32v32H8z" fill="#fff" /><path d="M10 15q1-6 8-6h14q7 1 6 6v22h-6V22H19v16h-8z" fill="#eee" stroke="#000" strokeWidth="2.500" /><path d="M14 14q2-4 6-4h10q4 1 5 4z" fill="#0a3be0" /></I>,
  <I><DotGrid /><path d="M15 43l-3-14-2-11 3-3 6 7 5-14 4-2 1 4-3 10 3 1 2 2 6 7-7 11-6 3z" fill="#e5e5e5" fillOpacity=".35" stroke="#3c3c3c" strokeWidth="2" /></I>,
  <I><path d="M1 31q-1-10 7-11 1-8 10-9Q23 3 33 6q8 3 8 11 8 4 6 14" stroke="#c4c4c4" strokeWidth="2" /><path d="M1 31h46v14H1z" stroke="#aaa" strokeWidth="2.500" /><path d="M7 33v5M12 33v4M18 33v6M24 33v4M30 33v6M35 33v4M41 33v6" stroke="#aaa" strokeWidth="1.500" /></I>,
  <I>{[[9, 1], [39, 1], [25, 11], [9, 21], [39, 21], [25, 31]].map(([x, y]) => tree(x, y))}</I>,
];

const Tile = ({ bg, fg = "#fff", t, badge }) => (
  <I s={36} vb="0 0 36 36"><rect x="1" y="1" width="34" height="34" rx={badge ? 1 : 6} fill={bg} />
    {badge && <><path d="M1 1h5v34H1z" fill="#fff" fillOpacity=".3" /><path d="M3 26h32v9H3z" fill="#000" fillOpacity=".45" /><T x={19} y={34} z={8.500} c="#fff">{badge}</T></>}
    <T x={badge ? 20 : 18} y={badge ? 21 : 24} z={badge ? 20 : 18} c={fg} f="Open Sans">{t}</T></I>
);
const Plane = () => <I s={36} vb="0 0 36 36"><rect width="36" height="36" rx="8" fill="#3aaeee" /><path d="M0 22h36v6q0 8-8 8H8q-8 0-8-8z" fill="#217bd4" /><path d="M24 36q4-8 12-10v3q-1 7-8 7z" fill="#f4cd45" /><path d="M18 4l11 23-8-2-3 5-3-5-8 2z" fill="#f6faff" /><path d="M18 5v21" stroke="#a7c8e6" /></I>;
const t36 = { s: 36, vb: "0 0 36 36" };
const tasks = [
  <I {...t36}><path d="M0 0h17v17H0zM19 0h17v17H19zM0 19h17v17H0zM19 19h17v17H19z" fill="#2e8edc" /><path d="M0 0h17v17H0z" fill="#53b8f1" /></I>,
  <I {...t36}><circle cx="15" cy="15" r="12" stroke="#222" strokeWidth="3" /><path d="M24 25l9 10" stroke="#222" strokeWidth="4" /></I>,
  <I {...t36}><path d="M11 1h25v24H11z" fill="#f5f5f5" /><path d="M0 11h27v24H0z" fill="#2b2b2b" /><path d="M11 11h16v14H11z" fill="#b4b4b4" /></I>,
  <I {...t36}><circle cx="18" cy="18" r="18" fill="#d5392f" /><path d="M2 9l10 16 6 11A18 18 0 0 1 2 9z" fill="#3a9c4a" /><path d="M18 9h16a18 18 0 0 1-17 27l9-13z" fill="#f3c73b" /><circle cx="18" cy="18" r="8.500" fill="#fff" /><circle cx="18" cy="18" r="7" fill="#4079e8" /></I>,
  <I {...t36}><path d="M0 4q0-2 2-2h11l4 4h19v28H0z" fill="#dd9d24" /><path d="M0 9h13l4-3h19v28H0z" fill="#fbcd51" /><path d="M6 25h24v9H6z" fill="#2a78c6" /><path d="M11 29h14" stroke="#174e8a" strokeWidth="2" /></I>,
  <I {...t36}><rect y="4" width="36" height="28" rx="2" fill="#3b3b3b" /><path d="M0 4h12v5H0z" fill="#777" /><path d="M12 4h24v5H12z" fill="#a6a6a6" /><path d="M6 13l7 6-7 6" stroke="#ddd" strokeWidth="3.500" /><path d="M17 23h12v4H17z" fill="#fff" /></I>,
  <I {...t36}><path d="M0 0h36v36H0z" fill="#de5a2c" /><circle cx="18" cy="18" r="10" stroke="#fff" strokeWidth="3.200" strokeDasharray="15 6" strokeDashoffset="-3" /><circle cx="7.500" cy="18" r="4" fill="#fff" /><circle cx="24" cy="8.500" r="4" fill="#fff" /><circle cx="24" cy="27.500" r="4" fill="#fff" /></I>,
  <I {...t36}><path d="M1 3l27-2 2 4" stroke="#000" strokeWidth="2" /><path d="M3 30V6q0-2 2-2h25" stroke="#000" strokeWidth="3" /><rect x="5" y="5" width="29" height="30" rx="3" fill="#000" /><path d="M8 12h24v20H8z" fill="#fff" /><T x={20} y={30} z={21} c="#000" f="Liberation Serif">31</T></I>,
  <I {...t36}><path d="M9 0h9v6H9z" fill="#c0528d" /><path d="M27 9h8v9h-8z" fill="#587fd6" /><path d="M0 16h6v9H0z" fill="#e9844b" /><rect x="2" y="3" width="29" height="31" rx="3" fill="#fafafa" /><T x={17} y={27} z={25} c="#d22c3c">Z</T></I>,
  <Plane />,
  <I {...t36}><path d="M26 0l10 4v28l-10 4L1 12l4-3zM26 0L1 24l4 3L26 9z" fill="#2a83ca" /><path d="M26 0l10 4v28l-10 4z" fill="#3d9de2" /><path d="M26 10v16L15 18z" fill="#e1e8da" /></I>,
  <I {...t36}><path d="M26 0l10 4v28l-10 4L6 18z" fill="#a56bd6" /><path d="M0 9l5-1 22 19V9L5 28l-5-2z" fill="#7a42ae" /><path d="M4 13v10l5-5zM27 11v14l-8-7z" fill="#e2e6dd" /></I>,
  <I {...t36}><path d="M20 1l8 8 1 9-5 8-14-8 1-9z" fill="#9b70f0" /><path d="M20 1l-2 16 6 9 5-8-1-9z" fill="#7a48da" /><path d="M10 17l-5 7 6 8 9 2 5-8-7-9z" fill="#5d2fbd" /><path d="M29 18l3 5-7 11-5 0 4-8z" fill="#8d60ea" /></I>,
  <Tile bg="#06203a" fg="#4ca8f5" t="Ps" />,
  <Tile bg="#2e0603" fg="#f59a2f" t="Ai" />,
  <I {...t36}><rect x="1" y="1" width="34" height="34" rx="6" fill="#ac2018" /><path d="M8 26c8-3 11-13 9-18-4 0 0 13 11 13 0-4-14 0-20 5z" stroke="#fff" strokeWidth="1.900" strokeLinejoin="round" /></I>,
  <Tile bg="#d12c50" t="A" badge="CAD" />,
  <Tile bg="#2a6de8" t="R" badge="RVT" />,
  <I {...t36}><path d="M18 0l17 7v21l-17 8-17-8V7z" fill="#277bd8" /><circle cx="18" cy="18" r="10.500" stroke="#fff" strokeWidth="2.500" /><path d="M14 10l8 2-3 6-6 0-3-4zM19 20l7-2-4 8z" fill="#fff" /></I>,
  <I {...t36}><path d="M14 3q12 0 13 11 0 10-12 11l-5 0-5 3 1-5Q0 19 1 13 3 4 14 3z" fill="#4fce70" /><circle cx="10" cy="11" r="1.700" fill="#17592b" /><circle cx="19" cy="11" r="1.700" fill="#17592b" /><path d="M26 13q9 1 10 9 0 5-4 7l0 3-3-2q-11 1-13-8 1-8 10-9z" fill="#f4f4f4" /><circle cx="23" cy="20" r="1.400" fill="#777" /><circle cx="30" cy="20" r="1.400" fill="#777" /></I>,
  <I {...t36}><path d="M1 2h28v32H1z" fill="#f4f4f0" stroke="#777" strokeWidth="1" /><path d="M2 14q10-6 26 0v19H2z" fill="#79c840" /><circle cx="17" cy="21" r="6" fill="#b8e078" stroke="#2f4b18" /><path d="M7 27l15 2" stroke="#233c14" strokeWidth="3" /><path d="M34 2L22 30" stroke="#d99037" strokeWidth="3" /><path d="M3 4h25" stroke="#777" strokeDasharray="2 2" strokeWidth="3" /></I>,
  <SiQgis size={36} color="#7fae43" />,
  <I {...t36}><path d="M2 2h32v32H2z" fill="#363636" /><path d="M19 19h15L22 34z" fill="#f5ce3b" /></I>,
  <I {...t36}><path d="M4 8Q12 1 28 2l6 8-2 14-8 9-8 2Q1 26 4 8z" fill="#d9d6d6" /><path d="M5 19q10-13 29-6l-1 12-3-6q-10 12-25 0z" fill="#55544f" /><circle cx="19" cy="18" r="7" fill="#8faa79" /><circle cx="19" cy="18" r="3.500" fill="#101510" /><path d="M6 17q14-13 28-4v14M8 23q12 7 21-3" stroke="#151515" strokeWidth="2.200" /><path d="M7 25q6 8 18 6" stroke="#aaa" strokeWidth="4" /></I>,
  <ActiveTile><CC s={36} /></ActiveTile>,
  <SiBlender size={34} color="#e78429" />,
];
const Cloud = ({ a, b, line }) => <I w={34} h={26} vb="0 0 34 26"><path d="M8 25q-7-1-7-8 0-6 7-7 2-9 10-9 8 1 9 9 6 2 6 8 0 6-6 7z" fill={a} stroke={line} strokeWidth="2" /><path d="M9 24L27 11q6 2 5 8-1 4-5 5z" fill={b} /></I>;

const leftTray = [
  <I w={24} h={18} vb="0 0 24 18"><path d="M2 15L12 4l10 11" stroke="#111" strokeWidth="2.200" /></I>,
  <I s={32} vb="0 0 32 32"><path d="M4 1h11v12H4z" fill="#5490ef" /><path d="M17 1h11v12H17z" fill="#f5c13f" /><path d="M4 15h11v7L4 32z" fill="#d84e42" /><path d="M17 15h11v17L17 22z" fill="#87bd58" /></I>,
  <I s={32} vb="0 0 36 36"><Plane /></I>,
  <Cloud a="#a3a3a3" b="#ededed" line="#222" />,
  <Cloud a="#2272c8" b="#4ba4e8" line="#3587d6" />,
  <FaDropbox size={32} color="#000" />,
];

const logs = [
  { t: "[21:24:54] [3D View 1] Color ramp shader loaded successfully" },
  { t: "[21:24:54] [3D View 1] Stereo mode: not supported" },
  { t: "[21:24:54] [ccGLWindow] 3D view initialized" },
  { t: "[21:24:54] [ccGLWindow] Succesfully initialized PBO for faster depth picking" },
  { t: "[21:24:54] [Global Shift] Max abs. coord = 1e+04 / max abs. diag = 1e+06", track: -0.14 },
  { t: "" },
];
const CloseGap = styled.span`width:24px;`;

export default function App() {
  return (
    <Shell>
      <Global />
      <TitleBar>
        <CC s={30} /><TitleText>CloudCompare v2.13.2 (Kharkiv - Jul  6 2024) [64-bit] - [3D View 1]</TitleText>
        <Grow />
        <WinButtons>
          <WinButton><I w={22} h={22} vb="0 0 22 22"><path d="M1 11h20" stroke="#000" strokeWidth="1.800" /></I></WinButton>
          <WinButton><I w={22} h={22} vb="0 0 22 22"><rect x="1.500" y="5" width="15" height="15" rx="3" stroke="#000" strokeWidth="2" /><path d="M6 1.500h9q5.500 0 5.500 5.500v8" stroke="#000" strokeWidth="2" /></I></WinButton>
          <WinButton><I w={22} h={22} vb="0 0 22 22"><path d="M1 1l20 20M21 1L1 21" stroke="#000" strokeWidth="1.800" /></I></WinButton>
        </WinButtons>
      </TitleBar>
      <MenuBar>
        <MenuLogo><CC s={29} /></MenuLogo>
        <MenuItem $w={70}><u>F</u>ile</MenuItem><MenuItem $w={74}>Edit</MenuItem><MenuItem $w={87}>Tools</MenuItem>
        <MenuItem $w={111}><u>D</u>isplay</MenuItem><MenuItem $w={110}>Plugins</MenuItem><MenuItem $w={129}>3D <u>V</u>iews</MenuItem><MenuItem $w={80}><u>H</u>elp</MenuItem>
        <Grow /><MenuCorner />
      </MenuBar>
      <ToolRow>
        <Tools $w={1547}><Dots /><Cells $pad={5}>{toolIcons.map((ic, i) => ic ? <Cell key={i}>{ic}</Cell> : <Sep key={i} />)}</Cells></Tools>
        <Tools $w={673}><Dots /><Cells $pad={8}>{scalarIcons.map((ic, i) => <Cell key={i} $w={62}>{ic}</Cell>)}</Cells></Tools>
        {pluginIcons.map((ic, i) => (
          <Tools key={i} $w={110}><Dots /><Cells $pad={7}><Cell $w={60}>{ic}</Cell></Cells><Grow /><Chevron><More /></Chevron></Tools>
        ))}
        <Popup>
          <Dots $h={142} />
          <PopBody>
            <PopGrid>{pyIcons.map((ic, i) => <div key={i}>{ic}</div>)}</PopGrid>
            <PopLabels><PopLabel $w={140}>Script Register</PopLabel><Triangle $gap={18} /><PopLabel $w={75}>Plugins</PopLabel><Triangle /></PopLabels>
          </PopBody>
          <PopMore><More /></PopMore>
        </Popup>
      </ToolRow>
      <Body>
        <SideBar $w={69} $left>
          <Dots $flat $w={57} />
          {leftIcons.map((ic, i) => <SideCell key={i} $left $on={i === 4}>{ic}{(i === 6 || i === 7) && <Caret />}</SideCell>)}
        </SideBar>
        <Center>
          <Upper>
            <Docks>
              <DockTitle $w={785}>DB Tree<Grow /><FloatIcon /></DockTitle>
              <Box $h={385} $m="23px 0 27px 18px" $bg="#fff" />
              <DockTitle $w={785}>Properties<Grow /><FloatIcon /></DockTitle>
              <Box $h={655} $m="22px 0 0 18px" $bg="#f0f0f0" />
            </Docks>
            <Viewport>
              <Overlay width="1898" height="1206" viewBox="864 156 1898 1206" overflow="visible">
                <path d="M1802 759h20M1812 749v20" stroke="#c8c8c8" strokeWidth="1.500" />
                <path d="M2266 1323h408M2266.500 1320v6M2673.500 1320v6" stroke="#fff" strokeWidth="1.500" />
                <T x={2470} y={1348} z={27} c="#fff" f="Liberation Serif" b={400} len={41}>0. 2</T>
                <path d="M2718 1323v-25" stroke="#5cf23c" strokeWidth="2" /><path d="M2718 1323h25" stroke="#e8271b" strokeWidth="2.500" />
                <T x={2722} y={1290} z={28} c="#5cf23c" f="Liberation Serif" b={400} len={13}>Y</T>
                <T x={2722} y={1322} z={28} c="#42a5f0" f="Liberation Serif" b={400} len={12}>Z</T>
                <T x={2754} y={1322} z={28} c="#e8271b" f="Liberation Serif" b={400} len={13}>X</T>
              </Overlay>
              <Caption>Load and Run script</Caption>
            </Viewport>
          </Upper>
          <ConsoleWrap>
            <DockTitle $w={2691} $pr={12}>Console<Grow /><FloatIcon /><CloseGap /><CloseIcon /></DockTitle>
            <ConsoleBox>
              <Log>{logs.map((l, i) => <Line key={i} $odd={i % 2 === 1} $track={l.track}>{l.t}</Line>)}</Log>
              <VThumb />
              <HThumb />
            </ConsoleBox>
          </ConsoleWrap>
        </Center>
        <SideBar $w={118}>
          <SideGroup $line><Dots $flat $w={106} />{rightTop.map((ic, i) => <SideCell key={i}>{ic}</SideCell>)}</SideGroup>
          <SideGroup><Dots $flat $w={106} />
            {rightIcons.map((ic, i) => <SideCell key={i} $h={i === 3 ? 88 : 0}>{ic}{i === 3 && <SideLabel>CSF Filter</SideLabel>}</SideCell>)}
          </SideGroup>
        </SideBar>
      </Body>
      <TaskBar>
        {tasks.map((ic, i) => <Task key={i} $ml={i ? 0 : 21}>{ic}{(i === 3 || i === 10) && <RunDot />}{i === 24 && <RunDot $wide />}</Task>)}
        <TaskSep />
        <Task><I {...t36}><path d="M0 0h36v36H0z" fill="#000" /><path d="M4 3l15 2-2 5 8 4 5 10-6-3 1 11-9 3-5-8-7 1 7-8z" fill="#fff" /><path d="M9 8l6 3-4 12zM17 15l5 6" stroke="#000" strokeWidth="1.500" fill="#000" /><T x={29} y={15} z={17} c="#fff" b={400}>8</T></I></Task>
        <Task><I w={34} h={8} vb="0 0 34 8"><circle cx="4" cy="4" r="3.200" fill="#111" /><circle cx="16.500" cy="4" r="3.200" fill="#111" /><circle cx="29" cy="4" r="3.200" fill="#111" /></I></Task>
        <Grow />
        {leftTray.map((ic, i) => <Task key={i} $w={64}>{ic}</Task>)}
        <Task $w={64}>英</Task>
        <Task $w={64} $ml={13}>拼</Task>
        <Task $w={56} $ml={15}><I w={34} h={36} vb="0 0 34 36"><path d="M20 4H6q-4 0-4 4v16q0 4 4 4h18q4 0 4-4v-6M14 28v5M20 28v5M8 34h18" stroke="#222" strokeWidth="2" /><rect x="25" y="3" width="8" height="12" rx="2" stroke="#222" strokeWidth="2" /><path d="M29 15v18h-4" stroke="#222" strokeWidth="2" /></I></Task>
        <Task $w={46}><I w={30} h={30} vb="0 0 30 30"><path d="M13 3L7 9H2v11h5l3 3M13 3v9" stroke="#222" strokeWidth="2" /><circle cx="20" cy="21" r="9" fill="#222" /><path d="M16.500 17.500l7 7m0-7l-7 7" stroke="#fff" strokeWidth="2" /></I></Task>
        <Clock>9:39 PM{"\n"}1/6/2025</Clock>
        <Task $w={62}><I w={28} h={32} vb="0 0 28 32"><path d="M14 1q9 0 9 11v6l4 5v1H1v-1l4-5v-6Q5 1 14 1zM9 27h10q-1 4-5 4t-5-4z" fill="#0f4391" /></I></Task>
        <Task $w={24} />
      </TaskBar>
      <ArrowSvg width="2880" height="800" viewBox="0 0 2880 800">
        <path d="M1888 731L1988 165" stroke="#ee1c24" strokeWidth="13" strokeLinecap="round" />
        <path d="M1996 126L1965 173l16-4 14 2.500 15 9z" fill="#ee1c24" />
      </ArrowSvg>
    </Shell>
  );
}
const ArrowSvg = styled.svg`position:absolute;left:0;top:0;z-index:5;pointer-events:none;fill:none;`;
